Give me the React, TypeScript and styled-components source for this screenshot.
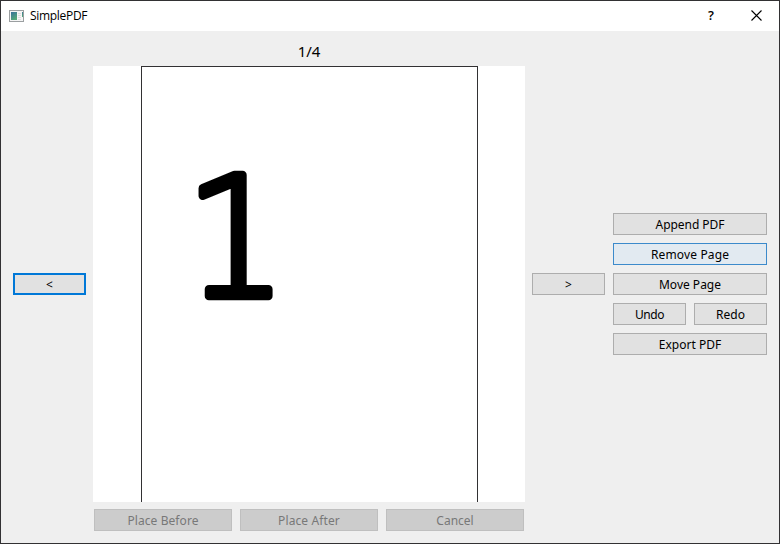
import React from "react";
import styled, { createGlobalStyle, css } from "styled-components";

const GlobalStyle = createGlobalStyle`
  *, *::before, *::after { box-sizing: border-box; }
  body { margin: 0; }
`;

const Window = styled.div`
  width: 780px;
  height: 544px;
  display: flex;
  flex-direction: column;
  border: 1px solid #323133;
  background: #efefef;
  color: #000;
  font: 12px/16px "Noto Sans", sans-serif;
  overflow: hidden;
`;

const TitleBar = styled.header`
  flex: 0 0 30px;
  display: flex;
  align-items: center;
  padding-left: 8px;
  background: #fff;
`;

const AppTitle = styled.h1`
  flex: 1;
  margin: 0 0 0 6px;
  font: 12px/16px "Open Sans", sans-serif;
  letter-spacing: -0.3px;
`;

const CaptionButton = styled.button`
  width: 45px;
  height: 30px;
  padding: 0 1px 2px 0;
  display: flex;
  align-items: center;
  justify-content: center;
  border: 0;
  background: transparent;
  color: #000;
  font: 600 13px/16px "Open Sans", sans-serif;
`;

const Body = styled.main`
  flex: 1;
  display: grid;
  grid-template-columns: 73px 432px 73px 154px;
  grid-template-rows: 486px;
  column-gap: 7px;
  padding: 10px 12px 0;
  align-items: center;
`;

const Viewer = styled.section`
  align-self: start;
  display: flex;
  flex-direction: column;
`;

const PageCounter = styled.div`
  height: 25px;
  padding-top: 1px;
  text-align: center;
  font-size: 15px;
  line-height: 19px;
`;

const Canvas = styled.div`
  height: 436px;
  display: flex;
  padding-left: 48px;
  background: #fff;
`;

const Sheet = styled.div`
  width: 337px;
  border: 1px solid #323133;
  border-bottom: 0;

  svg { display: block; }
`;

const PageNumeral = styled.text`
  font: 200 165.7px "DejaVu Sans", sans-serif;
  fill: #000;
  stroke: #000;
  stroke-width: 8.5px;
  stroke-linejoin: round;
`;

const PlacementRow = styled.div`
  display: flex;
  gap: 8px;
  padding: 7px 1px 0;
`;

const Sidebar = styled.aside`
  display: grid;
  grid-template-columns: 1fr 1fr;
  gap: 8px;
  margin-left: 1px;
  width: 154px;
`;

type Tone = "normal" | "focused" | "hovered";

const tones = {
  normal: css`border: 1px solid #adadad; background: #e1e1e1;`,
  focused: css`border: 2px solid #0078d7; background: #e1e1e1;`,
  hovered: css`border: 1px solid #3c8acb; background: #e2eaf1;`,
};

const PushButton = styled.button<{ $tone?: Tone; $wide?: boolean; $spacing?: number }>`
  flex: 1;
  min-width: 0;
  height: 22px;
  padding: 1px 0 0;
  display: flex;
  align-items: center;
  justify-content: center;
  grid-column: ${(p) => (p.$wide ? "span 2" : "auto")};
  color: #000;
  font: inherit;
  letter-spacing: ${(p) => p.$spacing ?? 0}px;
  ${(p) => tones[p.$tone ?? "normal"]}

  &:disabled {
    border-color: #bfbfbf;
    background: #cccccc;
    color: #787878;
  }
`;

function AppIcon() {
  return (
    <svg width="15" height="12" viewBox="0 0 15 12" shapeRendering="crispEdges">
      <defs>
        <linearGradient id="screen" x1="0" y1="0" x2="0.5" y2="1">
          <stop offset="0" stopColor="#38719b" />
          <stop offset="1" stopColor="#55a878" />
        </linearGradient>
      </defs>
      <path fill="#9b9fa1" d="M0 0h15v12H0z" />
      <path fill="#f5f5f5" d="M1 1h13v10H1z" />
      <path fill="url(#screen)" d="M2 2h6v8H2z" />
      <path fill="#dedede" d="M9 3h3v1H9zM9 5h3v1H9zM9 7h3v1H9zM9 9h3v1H9z" />
      <path fill="url(#screen)" d="M13 2h1v5h-1z" />
    </svg>
  );
}

export default function App() {
  return (
    <>
      <GlobalStyle />
      <Window>
        <TitleBar>
          <AppIcon />
          <AppTitle>SimplePDF</AppTitle>
          <CaptionButton>?</CaptionButton>
          <CaptionButton aria-label="Close">
            <svg width="11" height="11" viewBox="0 0 11 11">
              <path d="M.5.5l10 10M10.5.5l-10 10" stroke="#000" strokeWidth="1.1" />
            </svg>
          </CaptionButton>
        </TitleBar>
        <Body>
          <PushButton $tone="focused">&lt;</PushButton>
          <Viewer>
            <PageCounter>1/4</PageCounter>
            <Canvas>
              <Sheet>
                <svg width="335" height="435" viewBox="0 0 335 435">
                  <PageNumeral transform="translate(43.1 228.8) scale(0.97 1)">1</PageNumeral>
                </svg>
              </Sheet>
            </Canvas>
            <PlacementRow>
              <PushButton disabled $spacing={0.08}>Place Before</PushButton>
              <PushButton disabled $spacing={0.12}>Place After</PushButton>
              <PushButton disabled>Cancel</PushButton>
            </PlacementRow>
          </Viewer>
          <PushButton>&gt;</PushButton>
          <Sidebar>
            <PushButton $wide $spacing={-0.05}>Append PDF</PushButton>
            <PushButton $wide $tone="hovered" $spacing={0.15}>Remove Page</PushButton>
            <PushButton $wide>Move Page</PushButton>
            <PushButton $spacing={-0.4}>Undo</PushButton>
            <PushButton>Redo</PushButton>
            <PushButton $wide>Export PDF</PushButton>
          </Sidebar>
        </Body>
      </Window>
    </>
  );
}
